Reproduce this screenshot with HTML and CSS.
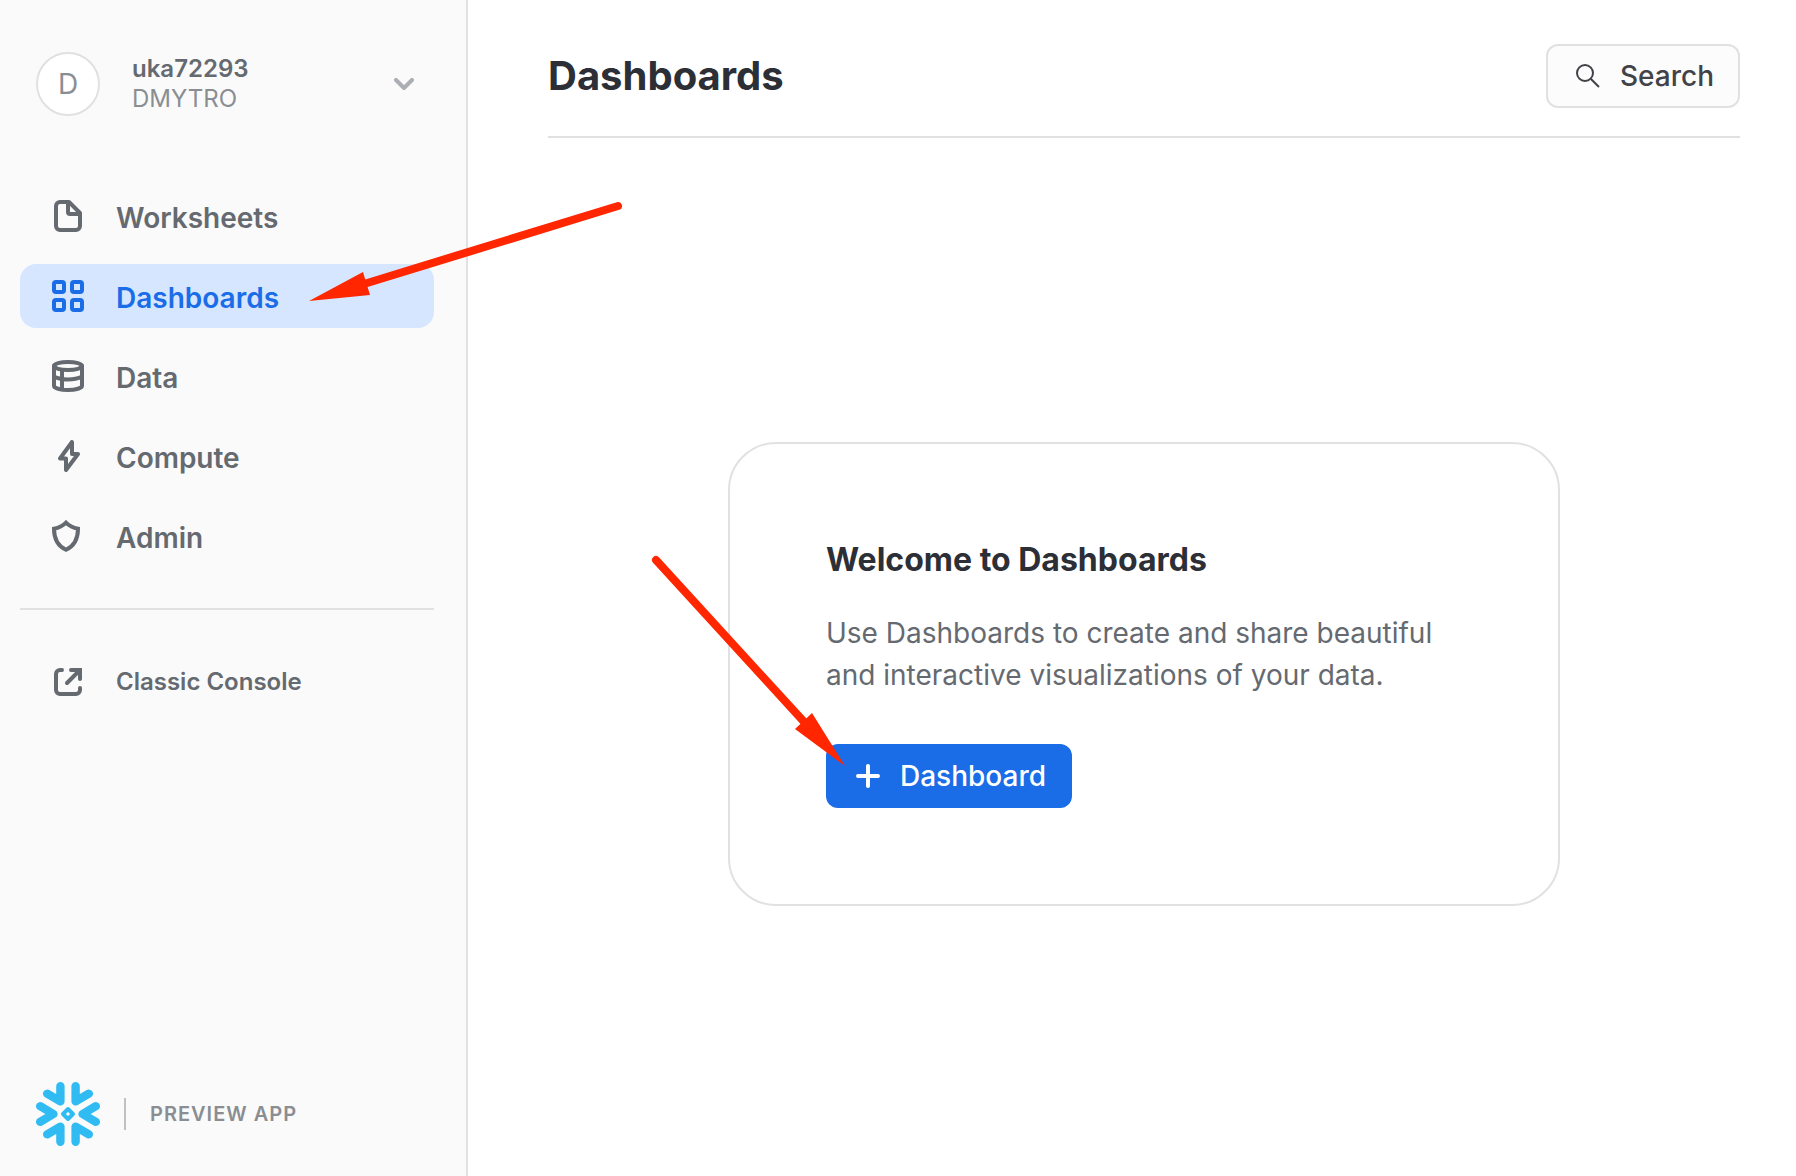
FILE: index.html
```html
<!DOCTYPE html>
<html lang="en">
<head>
  <meta charset="utf-8">
  <meta name="viewport" content="width=device-width, initial-scale=1">
  <title>Dashboards</title>
  <link rel="stylesheet" href="styles.css">
</head>
<body>
  <div class="app">
    <aside class="sidebar">
      <button class="account" type="button">
        <span class="avatar">D</span>
        <span class="account-text">
          <span class="account-name">uka72293</span>
          <span class="account-role">DMYTRO</span>
        </span>
        <svg class="chevron" viewBox="0 0 20 12" aria-hidden="true"><path d="M2 2l8 8 8-8"/></svg>
      </button>

      <nav class="nav">
        <a class="nav-item" href="#worksheets">
          <svg class="nav-icon" viewBox="0 0 32 32" aria-hidden="true"><path d="M17 2H8a4 4 0 0 0-4 4v20a4 4 0 0 0 4 4h16a4 4 0 0 0 4-4V13zM16 3v9a2 2 0 0 0 2 2h9"/></svg>
          <span class="nav-label">Worksheets</span>
        </a>
        <a class="nav-item active" href="#dashboards" aria-current="page">
          <svg class="nav-icon" viewBox="0 0 32 32" aria-hidden="true"><rect x="2" y="2" width="10" height="10" rx="2"/><rect x="20" y="2" width="10" height="10" rx="2"/><rect x="2" y="20" width="10" height="10" rx="2"/><rect x="20" y="20" width="10" height="10" rx="2"/></svg>
          <span class="nav-label">Dashboards</span>
        </a>
        <a class="nav-item" href="#data">
          <svg class="nav-icon" viewBox="0 0 32 32" aria-hidden="true"><ellipse cx="16" cy="6" rx="14" ry="4"/><path d="M2 6v20c0 2 6 4 14 4s14-2 14-4V6M2 16.500c4 2 9 3 14 3s10-1 14-3M10 10v19"/></svg>
          <span class="nav-label">Data</span>
        </a>
        <a class="nav-item" href="#compute">
          <svg class="nav-icon" viewBox="0 0 32 32" aria-hidden="true"><path d="M20 2v12h6L14 30V18.500H8z"/></svg>
          <span class="nav-label">Compute</span>
        </a>
        <a class="nav-item" href="#admin">
          <svg class="nav-icon" viewBox="0 0 32 32" aria-hidden="true"><path class="miter" d="M14 2.700C11 5.800 6.500 8 2 8.700 2 18 6 26 14 29.800 22 26 26 18 26 8.700 21.500 8 17 5.800 14 2.700z"/></svg>
          <span class="nav-label">Admin</span>
        </a>
      </nav>

      <a class="nav-item console-link" href="#classic">
        <svg class="nav-icon" viewBox="0 0 32 32" aria-hidden="true"><path d="M10 4H8a4 4 0 0 0-4 4v16a4 4 0 0 0 4 4h16a4 4 0 0 0 4-4v-2"/><path class="miter" d="M19 4h9v9M27 5L15 17"/></svg>
        <span>Classic Console</span>
      </a>

      <footer class="brand">
        <svg class="logo" viewBox="0 0 64 64" role="img" aria-label="Snowflake">
          <g class="logo-arms">
            <path d="M39.600 4.200v15.200l13.200-7.700M24.400 4.200v15.200l-13.200-7.700M39.600 59.800V44.600l13.200 7.700M24.400 59.800V44.600l-13.200 7.700M4.200 24.200L17.400 32 4.200 39.800M59.800 24.200L46.600 32l13.200 7.800"/>
          </g>
          <path class="logo-core" d="M32 27l5 5-5 5-5-5z"/>
        </svg>
        <span class="brand-label">PREVIEW APP</span>
      </footer>
    </aside>

    <main class="main">
      <header class="page-header">
        <h1 class="page-title">Dashboards</h1>
        <button class="search" type="button">
          <svg class="button-icon" viewBox="0 0 24 24" aria-hidden="true"><circle cx="9" cy="9" r="8"/><path d="M14.700 14.700L23 23"/></svg>
          <span>Search</span>
        </button>
      </header>

      <div class="stage">
        <section class="card">
          <h2 class="card-title">Welcome to Dashboards</h2>
          <p class="card-text">Use Dashboards to create and share beautiful and interactive visualizations of your data.</p>
          <button class="create" type="button">
            <svg class="button-icon plus" viewBox="0 0 24 24" aria-hidden="true"><path d="M12 2v20M2 12h20"/></svg>
            <span>Dashboard</span>
          </button>
        </section>
      </div>
    </main>

    <!-- Arrows pointing at the menu entry and the create button -->
    <svg class="arrows" viewBox="0 0 860 780" aria-hidden="true">
      <path class="shaft" d="M618 206L364 284M656 560L806 724"/>
      <path class="head" d="M309 301l54-29 7 23zM845 766l-33-53-17 16z"/>
    </svg>
  </div>
</body>
</html>
```

FILE: styles.css
```css
*, *::before, *::after { box-sizing: border-box; }

body {
  margin: 0;
  background: #fff;
  color: #656970;
  font-family: Inter, "Liberation Sans", sans-serif;
  font-size: 28px;
  line-height: 42px;
}

button {
  margin: 0;
  font: inherit;
  cursor: pointer;
}

svg {
  display: block;
  flex: none;
  fill: none;
  stroke: currentColor;
}

.app {
  position: relative;
  display: flex;
  min-height: 100vh;
}

/* Sidebar */
.sidebar {
  display: flex;
  flex: none;
  flex-direction: column;
  width: 468px;
  padding: 52px 32px 30px 20px;
  border-right: 2px solid #e0e1e2;
  background: #fafafa;
}

.account {
  display: flex;
  align-items: center;
  padding: 0 20px 0 16px;
  border: 0;
  background: none;
  color: #8a8e93;
  font-size: 24px;
  line-height: 30px;
  text-align: left;
}

.avatar {
  display: flex;
  align-items: center;
  justify-content: center;
  width: 64px;
  height: 64px;
  border: 2px solid #e0e1e2;
  border-radius: 50%;
  background: #fff;
  font-size: 28px;
}

.account-text {
  display: flex;
  flex: 1;
  flex-direction: column;
  margin-left: 32px;
}

.account-name {
  color: #656970;
  font-weight: 600;
}

.chevron {
  width: 20px;
  height: 12px;
  color: #abafb3;
  stroke-width: 4;
  stroke-linecap: round;
  stroke-linejoin: round;
}

.nav {
  display: flex;
  flex-direction: column;
  gap: 16px;
  margin-top: 68px;
  padding-bottom: 40px;
  border-bottom: 2px solid #e0e1e2;
}

.nav-item {
  display: flex;
  align-items: center;
  gap: 32px;
  height: 64px;
  padding: 0 32px;
  border-radius: 16px;
  color: #656970;
  font-weight: 600;
  text-decoration: none;
}

.nav-item.active {
  background: #d6e6ff;
  color: #1a6ce7;
}

.nav-label { padding-top: 4px; }

.nav-icon {
  width: 32px;
  height: 32px;
  stroke-width: 4;
  stroke-linecap: round;
  stroke-linejoin: round;
}

.miter { stroke-linejoin: miter; }

.console-link {
  margin-top: 40px;
  font-size: 24px;
}

.brand {
  display: flex;
  align-items: center;
  gap: 24px;
  margin-top: auto;
  padding-left: 16px;
}

.logo {
  width: 64px;
  height: 64px;
  color: #30bcf2;
  stroke-linecap: round;
  stroke-linejoin: round;
}

.logo-arms { stroke-width: 8.400; }

.logo-core { stroke-width: 4; }

.brand-label {
  padding-left: 24px;
  border-left: 2px solid #bfc1c3;
  color: #8a8e93;
  font-size: 20px;
  font-weight: 600;
  line-height: 32px;
  letter-spacing: 1px;
}

/* Main area */
.main {
  display: flex;
  flex: 1;
  flex-direction: column;
  padding: 44px 56px 0 80px;
}

.page-header {
  display: flex;
  align-items: center;
  justify-content: space-between;
  padding-bottom: 28px;
  border-bottom: 2px solid #e0e1e2;
}

.page-title {
  margin: 0;
  color: #2d2f36;
  font-size: 40px;
  font-weight: 700;
  line-height: 48px;
}

.search,
.create {
  display: flex;
  align-items: center;
  height: 64px;
  border-radius: 12px;
  font-weight: 500;
}

.search {
  gap: 20px;
  padding: 0 24px 0 28px;
  border: 2px solid #e0e1e2;
  background: #fcfcfc;
  color: #414349;
}

.button-icon {
  width: 24px;
  height: 24px;
  stroke-width: 2;
}

.stage {
  display: flex;
  flex: 1;
  align-items: center;
  justify-content: center;
  padding-top: 34px;
}

.card {
  display: flex;
  flex-direction: column;
  align-items: flex-start;
  width: 100%;
  max-width: 832px;
  padding: 96px;
  border: 2px solid #e0e1e2;
  border-radius: 48px;
}

.card-title {
  margin: 0 0 32px;
  color: #2d2f36;
  font-size: 32px;
  font-weight: 700;
  line-height: 40px;
}

.card-text { margin: 0 0 48px; }

.create {
  gap: 20px;
  padding: 0 26px 0 30px;
  border: 0;
  background: #1a6ce7;
  color: #fff;
}

.plus {
  stroke-width: 4;
  stroke-linecap: round;
}

.arrows {
  position: absolute;
  top: 0;
  left: 0;
  width: 860px;
  height: 780px;
  color: #ff2600;
  pointer-events: none;
}

.shaft {
  stroke-width: 8;
  stroke-linecap: round;
}

.head {
  fill: currentColor;
  stroke: none;
}
```
